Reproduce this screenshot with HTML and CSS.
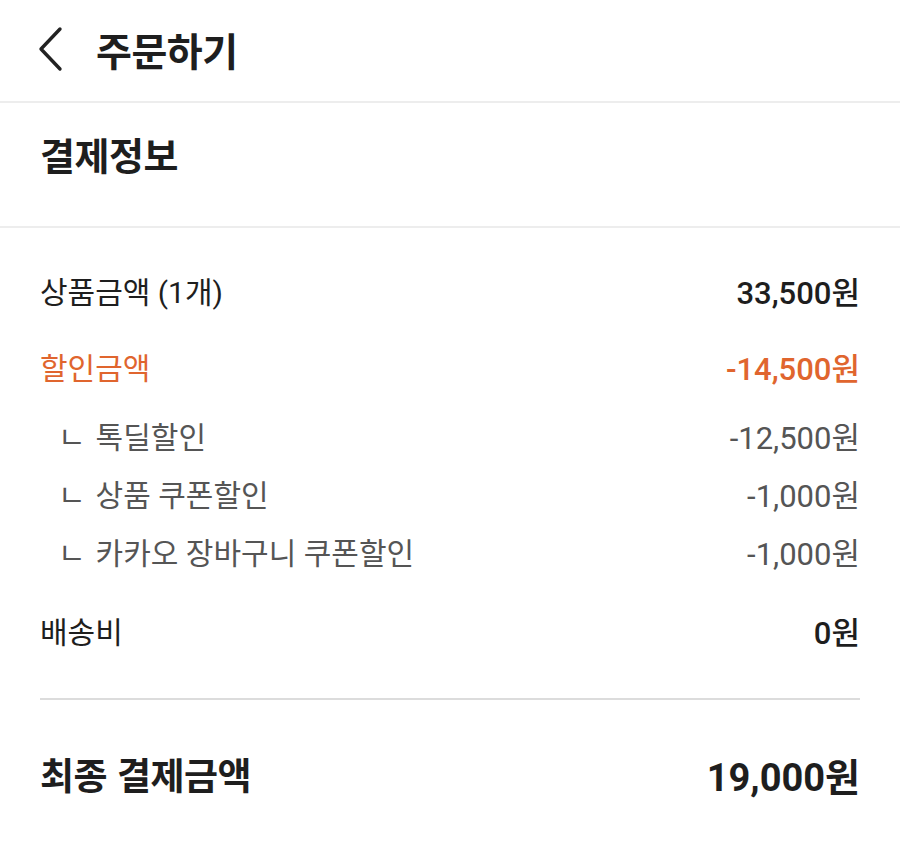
FILE: index.html
```html
<!DOCTYPE html>
<html lang="ko">

<head>
	<meta charset="utf-8">
	<title>주문하기</title>
	<link rel="stylesheet" href="styles.css">
</head>

<body>
	<header class="topbar">
		<button class="back" aria-label="뒤로">
			<svg width="30" height="46" viewBox="0 0 30 46">
				<path d="M24 3 L5 23 L24 43" fill="none" stroke="#222" stroke-width="3.4" stroke-linecap="round" stroke-linejoin="round" />
			</svg>
		</button>
		<h1 class="title">주문하기</h1>
	</header>

	<section class="section-head">
		<h2>결제정보</h2>
	</section>

	<section class="pay">
		<div class="row">
			<span>상품금액 (1개)</span>
			<span class="amount">33,500원</span>
		</div>
		<div class="row discount">
			<span>할인금액</span>
			<span class="amount">-14,500원</span>
		</div>
		<div class="sub">
			<div class="row small">
				<span><i>ㄴ</i>톡딜할인</span>
				<span class="amount">-12,500원</span>
			</div>
			<div class="row small">
				<span><i>ㄴ</i>상품 쿠폰할인</span>
				<span class="amount">-1,000원</span>
			</div>
			<div class="row small">
				<span><i>ㄴ</i>카카오 장바구니 쿠폰할인</span>
				<span class="amount">-1,000원</span>
			</div>
		</div>
		<div class="row ship">
			<span>배송비</span>
			<span class="amount">0원</span>
		</div>

		<div class="total">
			<span>최종 결제금액</span>
			<span class="amount">19,000원</span>
		</div>
	</section>
</body>

</html>
```

FILE: styles.css
```css
* {
	box-sizing: border-box;
}

body {
	margin: 0;
	background: #fff;
	color: #1e1e1e;
	font-family: "Roboto", "Noto Sans CJK KR", sans-serif;
}

.topbar {
	display: flex;
	align-items: center;
	height: 103px;
	padding: 0 0 4px 36px;
	border-bottom: 2px solid #ededed;
}

.back {
	display: flex;
	padding: 0;
	border: none;
	background: none;
}

.title {
	margin: 0 0 0 30px;
	font-family: "Noto Sans CJK KR", sans-serif;
	font-size: 39px;
	font-weight: 700;
	letter-spacing: -0.5px;
}

.section-head {
	display: flex;
	align-items: center;
	height: 125px;
	padding: 0 40px 22px;
	border-bottom: 2px solid #ededed;
}

.section-head h2 {
	margin: 0;
	font-family: "Noto Sans CJK KR", sans-serif;
	font-size: 38px;
	font-weight: 700;
	letter-spacing: -0.5px;
}

.pay {
	padding: 24px 40px 0;
}

.row {
	display: flex;
	justify-content: space-between;
	align-items: center;
	height: 76px;
	font-size: 30px;
	color: #1e1e1e;
}

.amount {
	font-size: 31px;
	font-weight: 500;
}

.discount {
	color: #e0652e;
}

.sub {
	padding-top: 2px;
}

.row.small {
	height: 58px;
	color: #555;
}

.row.small i {
	font-style: normal;
	margin: 0 10px 0 18px;
}

.row.small .amount {
	font-weight: 400;
}

.ship {
	margin-top: 12px;
}

.total {
	display: flex;
	justify-content: space-between;
	align-items: center;
	height: 150px;
	margin-top: 30px;
	border-top: 2px solid #dcdcdc;
	font-family: "Noto Sans CJK KR", sans-serif;
	font-size: 37px;
	font-weight: 700;
	letter-spacing: -0.5px;
}

.total .amount {
	font-family: "Roboto", "Noto Sans CJK KR", sans-serif;
	font-size: 38px;
	font-weight: 700;
	letter-spacing: 0;
}
```
